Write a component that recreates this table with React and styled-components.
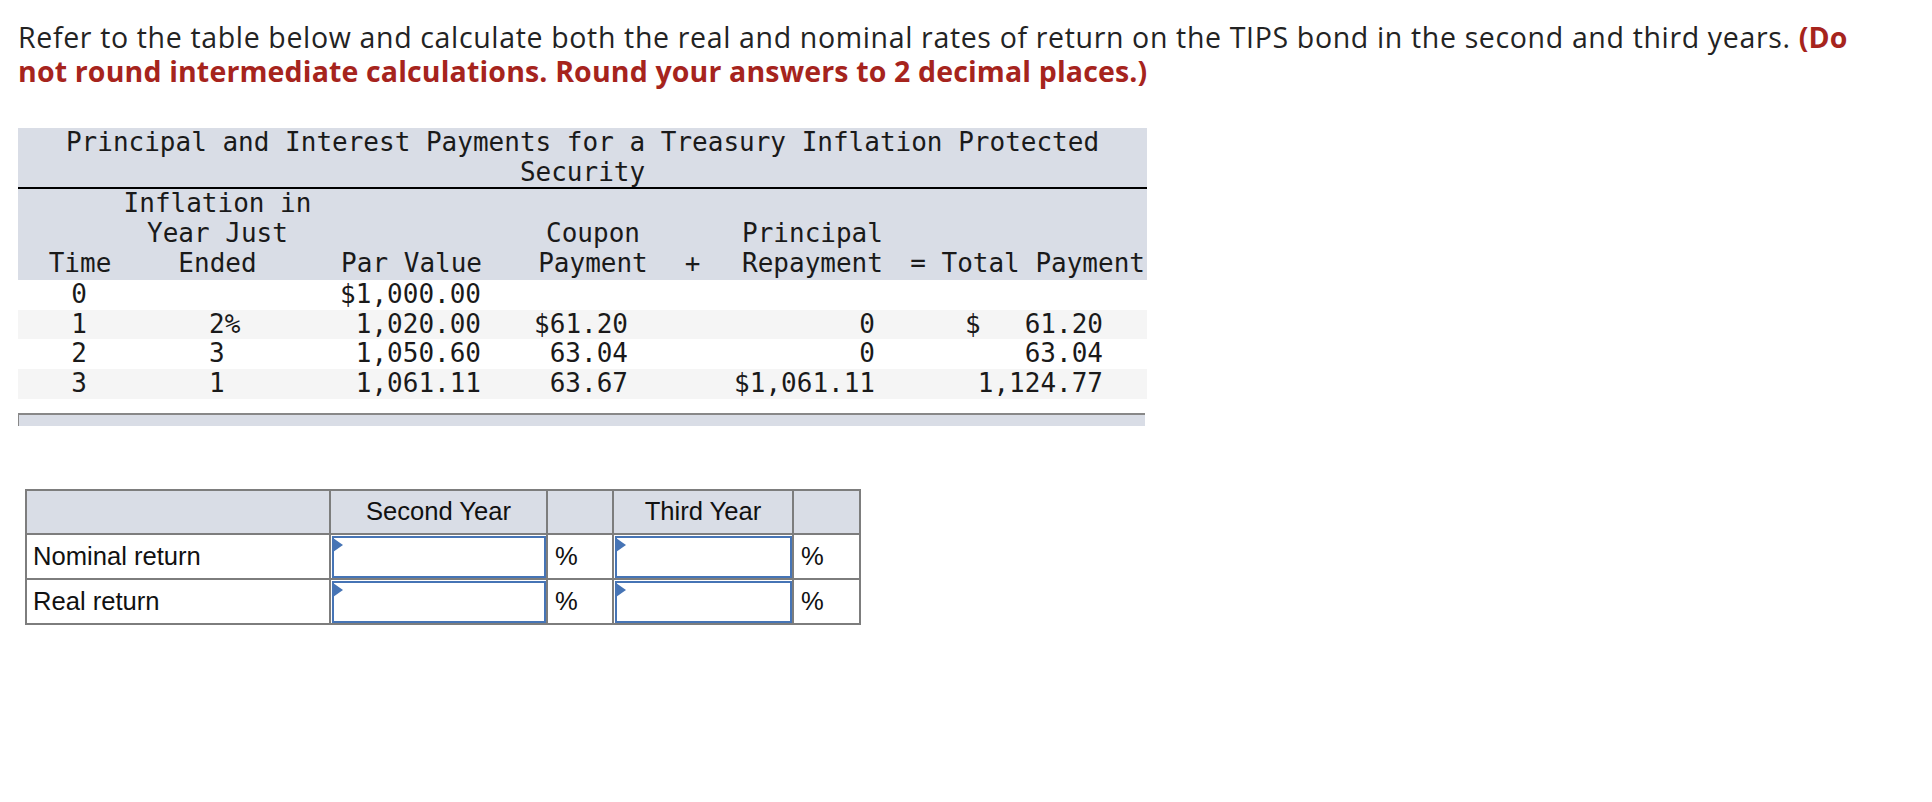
import React from 'react'
import styled, { createGlobalStyle } from 'styled-components'

const GlobalStyle = createGlobalStyle`
  body {
    margin: 8px;
    background: #ffffff;
    color: #1f1f1f;
  }
`

const MONO = `"DejaVu Sans Mono", "Liberation Mono", monospace`

const Page = styled.div`
  padding: 12px 0 0 10px;
`

const Question = styled.p`
  margin: 0;
  font-family: "Open Sans", Lato, sans-serif;
  font-size: 28.5px;
  letter-spacing: 0.65px;
  line-height: 34px;
  color: #232323;
`

const Hint = styled.strong`
  color: #a6241d;
  font-weight: 700;
  letter-spacing: 0.15px;
`

const Exhibit = styled.div`
  width: 1129px;
  margin-top: 40px;
  font-family: ${MONO};
  font-size: 26px;
  line-height: 29.6px;
  color: #1a1a1a;
`

const Title = styled.div`
  background: #d9dde6;
  text-align: center;
  border-bottom: 2px solid #000;
`

const Grid = styled.table`
  width: 100%;
  border-collapse: collapse;
  table-layout: fixed;
  white-space: pre;
`

const HeadRow = styled.tr`
  background: #d9dde6;
  & > th {
    height: 89px;
    padding-bottom: 2px;
  }
`

const Row = styled.tr`
  background: ${p => (p.$shade ? '#f5f5f5' : '#ffffff')};
  & > td {
    height: 29.6px;
  }
`

const Head = styled.th`
  font-weight: 400;
  vertical-align: bottom;
  padding: 0;
  text-align: ${p => p.$align || 'center'};
  padding-left: ${p => p.$pl || 0}px;
  padding-right: ${p => p.$pr || 0}px;
`

const Cell = styled.td`
  padding: 0;
  text-align: ${p => p.$align || 'right'};
  padding-left: ${p => p.$pl || 0}px;
  padding-right: ${p => p.$pr || 0}px;
`

const Money = styled.div`
  display: flex;
  justify-content: space-between;
`

const Footer = styled.div`
  height: 11px;
  margin-top: 14px;
  background: #d9dde6;
  border-top: 2px solid #888888;
  border-left: 1px solid #888888;
  margin-right: 2px;
`

const Answers = styled.table`
  margin: 63px 0 0 7px;
  border-collapse: collapse;
  table-layout: fixed;
  width: 834px;
  font-family: "Liberation Sans", Arial, sans-serif;
  font-size: 25.6px;
  color: #111111;
`

const AHead = styled.th`
  background: #d9dde6;
  border: 2px solid #7d7d7d;
  font-weight: 400;
  height: 42px;
  padding: 0;
  text-align: center;
`

const ACell = styled.td`
  border: 2px solid #7d7d7d;
  height: 42px;
  padding: 0 0 0 ${p => p.$pl || 0}px;
  background: #ffffff;
`

const InputWrap = styled.div`
  position: relative;
  height: 42px;
  box-sizing: border-box;
  border: 2px solid #4674b5;
  margin: 1px 0 0 1px;
`

const Flag = styled.span`
  position: absolute;
  left: -1px;
  top: 0;
  width: 0;
  height: 0;
  border-top: 7px solid transparent;
  border-bottom: 7px solid transparent;
  border-left: 10px solid #4674b5;
`

const Blank = styled.input`
  border: none;
  outline: none;
  width: 100%;
  height: 100%;
  padding: 0 8px;
  box-sizing: border-box;
  background: transparent;
  font: inherit;
`

const rows = [
  { t: '0', inf: '', par: '$1,000.00', cp: '', pr: '', tot: '', cur: '' },
  { t: '1', inf: '2%', par: '1,020.00', cp: '$61.20', pr: '0', tot: '61.20', cur: '$' },
  { t: '2', inf: '3', par: '1,050.60', cp: '63.04', pr: '0', tot: '63.04', cur: '' },
  { t: '3', inf: '1', par: '1,061.11', cp: '63.67', pr: '$1,061.11', tot: '1,124.77', cur: '' },
]

function AnswerInput() {
  return (
    <InputWrap>
      <Flag />
      <Blank type="text" />
    </InputWrap>
  )
}

export default function App() {
  return (
    <>
      <GlobalStyle />
      <Page>
        <Question>
          Refer to the table below and calculate both the real and nominal rates of return on the TIPS bond in the second and third years. <Hint>(Do<br />not round intermediate calculations. Round your answers to 2 decimal places.)</Hint>
        </Question>

        <Exhibit>
          <Title>
            Principal and Interest Payments for a Treasury Inflation Protected
            <br />
            Security
          </Title>
          <Grid>
            <colgroup>
              <col style={{ width: 100 }} />
              <col style={{ width: 199 }} />
              <col style={{ width: 173 }} />
              <col style={{ width: 170 }} />
              <col style={{ width: 65 }} />
              <col style={{ width: 170 }} />
              <col style={{ width: 252 }} />
            </colgroup>
            <thead>
              <HeadRow>
                <Head $pl={24}>Time</Head>
                <Head>{'Inflation in\nYear Just\nEnded'}</Head>
                <Head $align="right" $pr={8}>Par Value</Head>
                <Head $pl={36}>{'Coupon\nPayment'}</Head>
                <Head>+</Head>
                <Head $pl={5}>{'Principal\nRepayment'}</Head>
                <Head $align="right" $pr={2}>= Total Payment</Head>
              </HeadRow>
            </thead>
            <tbody>
              {rows.map((r, i) => (
                <Row key={r.t} $shade={i % 2 === 1}>
                  <Cell $align="center" $pl={22}>{r.t}</Cell>
                  <Cell $align="left" $pl={91}>{r.inf}</Cell>
                  <Cell $pr={9}>{r.par}</Cell>
                  <Cell $pr={32}>{r.cp}</Cell>
                  <Cell />
                  <Cell $pr={20}>{r.pr}</Cell>
                  <Cell $pl={70} $pr={44}>
                    <Money>
                      <span>{r.cur}</span>
                      <span>{r.tot}</span>
                    </Money>
                  </Cell>
                </Row>
              ))}
            </tbody>
          </Grid>
          <Footer />
        </Exhibit>

        <Answers>
          <colgroup>
            <col style={{ width: 304 }} />
            <col style={{ width: 217 }} />
            <col style={{ width: 66 }} />
            <col style={{ width: 180 }} />
            <col style={{ width: 67 }} />
          </colgroup>
          <thead>
            <tr>
              <AHead />
              <AHead>Second Year</AHead>
              <AHead />
              <AHead>Third Year</AHead>
              <AHead />
            </tr>
          </thead>
          <tbody>
            {['Nominal return', 'Real return'].map(label => (
              <tr key={label}>
                <ACell $pl={6}>{label}</ACell>
                <ACell><AnswerInput /></ACell>
                <ACell $pl={7}>%</ACell>
                <ACell><AnswerInput /></ACell>
                <ACell $pl={7}>%</ACell>
              </tr>
            ))}
          </tbody>
        </Answers>
      </Page>
    </>
  )
}
